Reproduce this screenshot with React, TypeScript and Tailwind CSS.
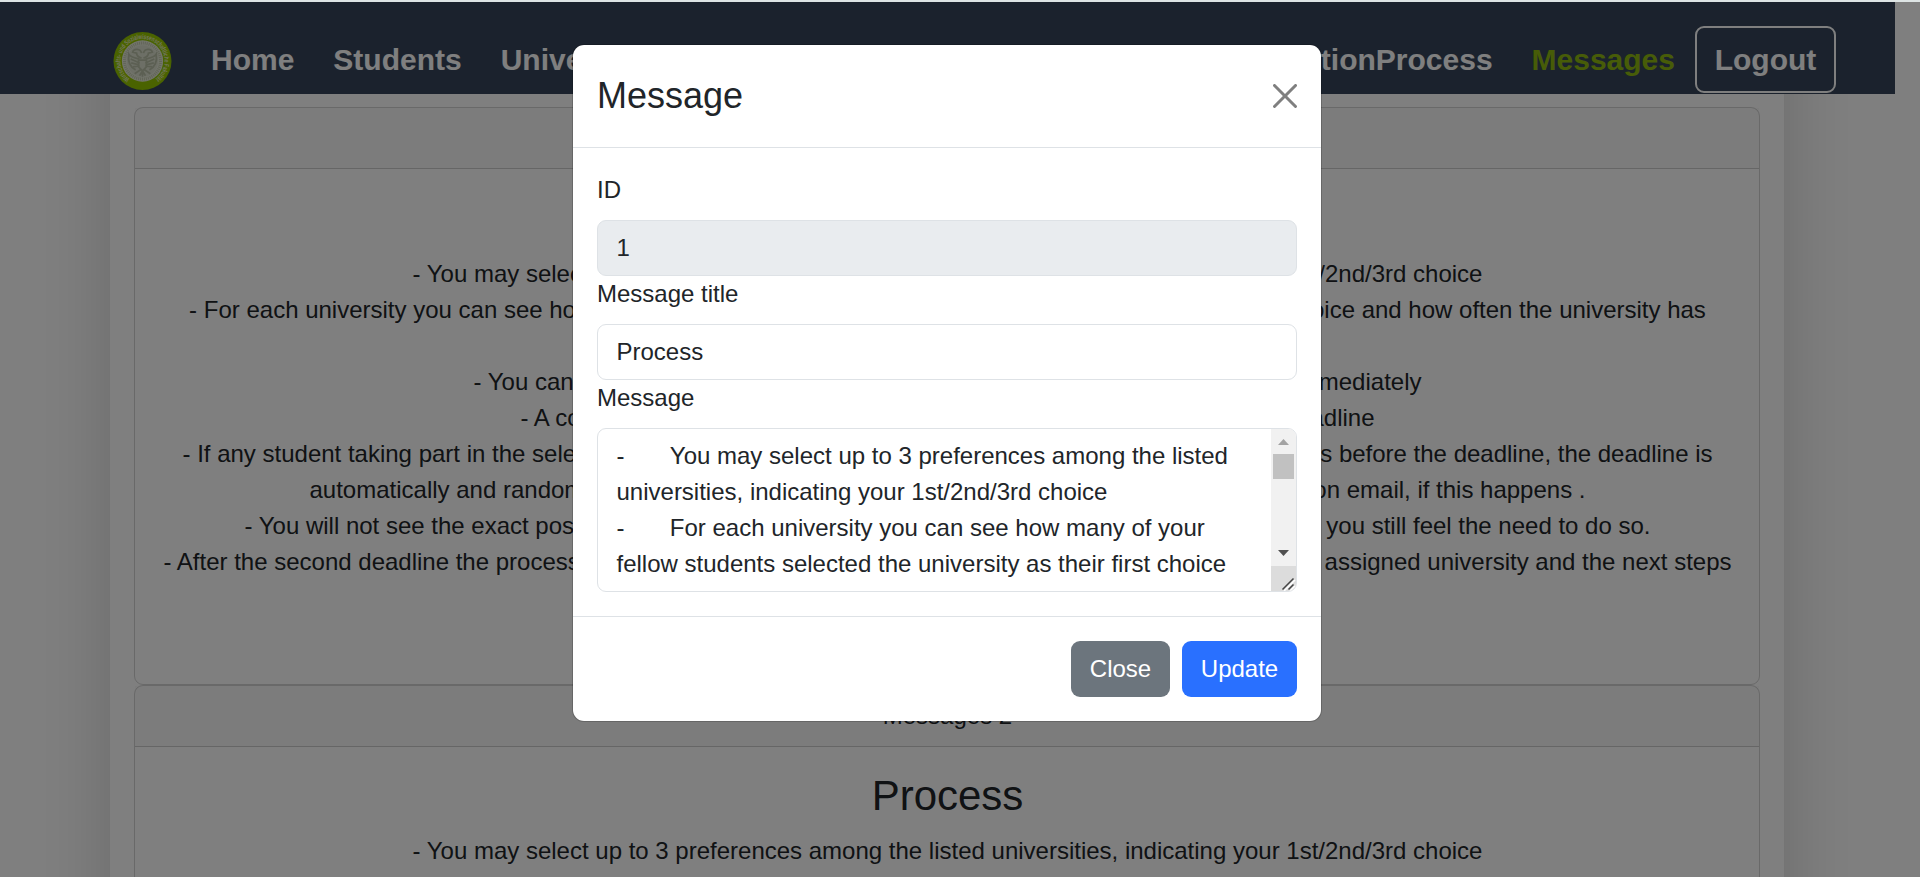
const edge = "border-black/[.175]";

function Seal() {
  return (
    <svg viewBox="0 0 60 60" className="h-[60px] w-[59px] shrink-0" aria-hidden="true">
      <defs>
        <path id="seal-ring" d="M17 48.2 A22.4 22.4 0 1 1 43 48.2" />
      </defs>
      <circle cx="30" cy="30" r="29.5" fill="#94c600" />
      <text fontSize="7" fill="#e2ecbd" className="font-['Liberation_Sans',sans-serif]">
        <textPath href="#seal-ring" textLength="112" lengthAdjust="spacingAndGlyphs">Wirtschafts- und Sozialwissenschaftliche Fakultät</textPath>
      </text>
      <circle cx="30" cy="30" r="21" fill="#e6ead9" />
      <circle cx="30" cy="30" r="18.3" fill="none" stroke="#c6ccb2" strokeWidth="3" strokeDasharray="1.1 .9" />
      <circle cx="30" cy="30" r="16" fill="#dadfcd" />
      <g fill="none" stroke="#b8bfa6" strokeWidth="1.8">
        <path d="M29 22c-1-5-8-5-9-1l4 1c0 3 2 4 5 5M31 22c1-5 8-5 9-1l-4 1c0 3-2 4-5 5" />
        <path d="M27 28c-5-1-10-3-11-5-1 7 1 13 7 16M33 28c5-1 10-3 11-5 1 7-1 13-7 16" />
        <path d="M18 28l9 4M18.500 32l8 2M20 36l7-1M42 28l-9 4M41.500 32l-8 2M40 36l-7-1" />
        <path d="M26 29h8v7l-4 4-4-4zM28 39l-6 4M32 39l6 4M30 39v7M30 40l-3 5M30 40l3 5" />
      </g>
    </svg>
  );
}

type Line = { start: string; end?: string; width?: string };

const lines: Line[] = [
  { start: "- You may select up to 3 preferences among the listed universities, indicating your 1st/2nd/3rd choice" },
  {
    start:
      "- For each university you can see how many of your fellow students selected the university as their first choice and how often the university has",
  },
  { start: "been selected" },
  { start: "- You can change", end: "immediately", width: "w-[948px]" },
  { start: "- A co", end: "deadline", width: "w-[854px]" },
  { start: "- If any student taking part in the selection", end: "preferences before the deadline, the deadline is", width: "w-[1530px]" },
  { start: "automatically and randomly", end: "on email, if this happens .", width: "w-[1276px]" },
  { start: "- You will not see the exact position", end: "if you still feel the need to do so.", width: "w-[1406px]" },
  { start: "- After the second deadline the process", end: "the assigned university and the next steps", width: "w-[1568px]" },
];

function MessageCard({ id, count, titleGap }: { id: number; count: number; titleGap: string }) {
  return (
    <article className={`flex h-[578px] shrink-0 flex-col rounded-[9px] border text-center ${edge}`}>
      <header className={`border-b bg-[#212529]/[.03] py-3 pl-px ${edge}`}>Messages {id}</header>
      <div className="py-6 pr-6 pl-[25px]">
        <h2 className={`text-[42px] leading-[50px] ${titleGap}`}>Process</h2>
        {lines.slice(0, count).map((line) => (
          <p key={line.start} className={`mx-auto flex whitespace-nowrap ${line.end ? "justify-between" : "justify-center"} ${line.width ?? ""}`}>
            <span>{line.start}</span>
            {line.end && <span>{line.end}</span>}
          </p>
        ))}
      </div>
    </article>
  );
}

function Navbar() {
  return (
    <nav className="flex h-[92px] w-[1895px] shrink-0 items-start bg-[#36455a] pt-6 pl-[113px] pr-[59px] text-[30px] leading-[45px] font-bold text-white">
      <div className="pt-[5px]">
        <Seal />
      </div>
      <div className="flex flex-1 gap-[39px] pt-[11px] pl-[39px]">
        <a>Home</a>
        <a>Students</a>
        <a>Universities</a>
        <a className="ml-auto">SelectionProcess</a>
        <a className="text-[#8fb911]">Messages</a>
      </div>
      <button className="ml-5 w-[141px] rounded-[9px] border-2 border-white py-[9px]">Logout</button>
    </nav>
  );
}

function ScrollTrack() {
  return (
    <div className="flex w-[25px] shrink-0 flex-col items-center bg-[#f1f1f1]">
      <svg className="h-[25px] w-[25px] shrink-0" viewBox="0 0 25 25"><path d="M7 16h11l-5.5-6z" fill="#a3a3a3" /></svg>
      <div className="h-[25px] w-[21px] bg-[#c1c1c1]" />
      <svg className="mt-auto h-[25px] w-[25px] shrink-0" viewBox="0 0 25 25"><path d="M7 9h11l-5.5 6z" fill="#505050" /></svg>
      <svg className="h-[25px] w-[25px] shrink-0 bg-[#dcdcdc]" viewBox="0 0 25 25">
        <path d="M12 24L23 13M18 24l5-5" stroke="#fff" strokeWidth="1.5" transform="translate(1 1)" />
        <path d="M11.5 23.5l11-11M17.5 23.5l5-5" stroke="#454545" strokeWidth="1.5" />
      </svg>
    </div>
  );
}

function MessageModal() {
  const field = "flex rounded-[9px] border border-[#dee2e6]";
  return (
    <section className="flex h-[678px] w-[750px] flex-col rounded-[12px] border border-black/[.175] bg-white bg-clip-padding">
      <header className="flex items-center justify-between border-b border-[#dee2e6] p-6">
        <h1 className="text-[36px] leading-[54px]">Message</h1>
        <button aria-label="Close dialog">
          <svg viewBox="0 0 16 16" className="h-6 w-6" fill="#000" fillOpacity=".5">
            <path d="M.293.293a1 1 0 0 1 1.414 0L8 6.586 14.293.293a1 1 0 1 1 1.414 1.414L9.414 8l6.293 6.293a1 1 0 0 1-1.414 1.414L8 9.414l-6.293 6.293a1 1 0 0 1-1.414-1.414L6.586 8 .293 1.707a1 1 0 0 1 0-1.414z" />
          </svg>
        </button>
      </header>
      <div className="flex flex-col p-6">
        <label className="mb-3">ID</label>
        <div className={`${field} bg-[#e9ecef] px-[18.5px] py-[9px]`}>1</div>
        <label className="mb-3">Message title</label>
        <div className={`${field} px-[18.5px] py-[9px]`}>Process</div>
        <label className="mb-3">Message</label>
        <div className={`${field} h-[164px] overflow-hidden`}>
          <p className="flex-1 py-[9px] pr-[8px] pl-[18.5px] whitespace-pre-wrap [tab-size:8]">
            {"-\tYou may select up to 3 preferences among the listed\nuniversities, indicating your 1st/2nd/3rd choice\n-\tFor each university you can see how many of your\nfellow students selected the university as their first choice"}
          </p>
          <ScrollTrack />
        </div>
      </div>
      <footer className="flex justify-end gap-3 border-t border-[#dee2e6] p-6 text-white">
        <button className="h-14 w-[99px] rounded-[9px] bg-[#6c757d]">Close</button>
        <button className="h-14 w-[115px] rounded-[9px] bg-[#2970ff]">Update</button>
      </footer>
    </section>
  );
}

export default function App() {
  return (
    <div className="flex h-[877px] w-[1920px] flex-col overflow-hidden bg-white font-['Liberation_Sans',Arial,sans-serif] text-[24px] leading-9 text-[#212529]">
      <div className="h-[2px] shrink-0 bg-[#dde4e4]" />
      <div className="relative flex h-[875px] flex-col overflow-hidden">
        <div className="z-10 shrink-0">
          <Navbar />
        </div>
        <main className="-mt-[200px] ml-[110px] flex h-[1500px] w-[1674px] shrink-0 flex-col bg-white px-6 pt-[213px] shadow-[0_24px_72px_rgba(0,0,0,.175)]">
          <MessageCard id={1} count={9} titleGap="mb-[13px]" />
          <MessageCard id={2} count={1} titleGap="mb-3" />
        </main>
        <div className="absolute inset-0 z-20 flex items-start justify-center bg-black/50 pt-[42px] pr-[26px]">
          <MessageModal />
        </div>
      </div>
    </div>
  );
}
